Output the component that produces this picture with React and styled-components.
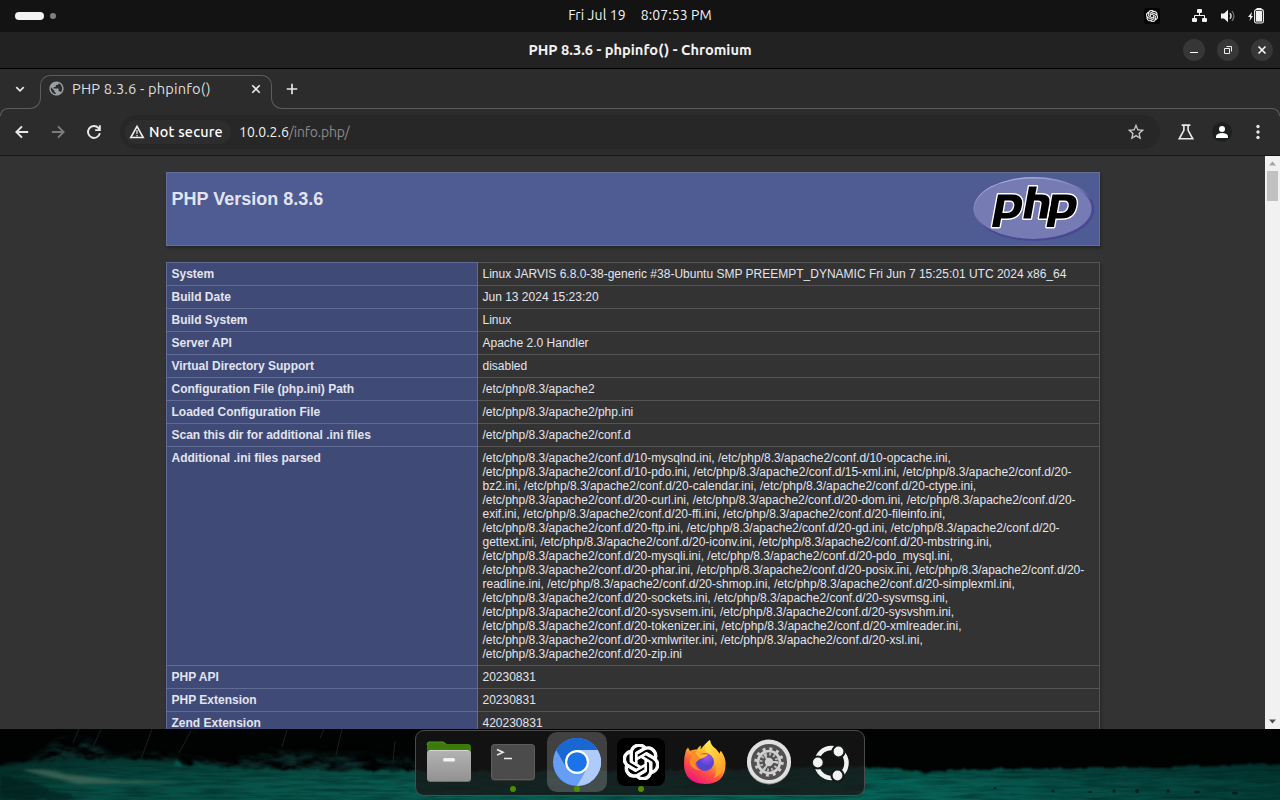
import React from 'react';
import styled, { createGlobalStyle, css } from 'styled-components';
import { SiOpenai } from 'react-icons/si';
import { MdPublic, MdStarBorder } from 'react-icons/md';

const Global = createGlobalStyle`
  html, body { margin: 0; padding: 0; background: #000; }
  *, *::before, *::after { box-sizing: border-box; }
  svg { display: block; flex: none; }
`;

const UI = '"Ubuntu", "Noto Sans", "Open Sans", sans-serif';

const Desktop = styled.div`
  position: relative;
  display: flex;
  flex-direction: column;
  width: 1280px;
  height: 800px;
  overflow: hidden;
  background: #000;
  font-family: ${UI};
  color: #f2f2f2;
`;

const PanelBar = styled.header`
  display: grid;
  grid-template-columns: 1fr auto 1fr;
  align-items: center;
  flex: none;
  height: 32px;
  background: #131313;
`;

const Workspaces = styled.div`
  display: flex;
  align-items: center;
  gap: 6px;
  padding-left: 15px;
`;

const Pill = styled.span`
  width: ${p => (p.$active ? 29 : 6)}px;
  height: ${p => (p.$active ? 8 : 6)}px;
  border-radius: 4px;
  background: ${p => (p.$active ? '#f2f2f2' : '#808080')};
`;

const Clock = styled.div`
  display: flex;
  gap: 15px;
  padding-bottom: 2px;
  font-size: 14px;
  line-height: 20px;
  white-space: nowrap;
  letter-spacing: 0.1px;
`;

const Tray = styled.div`
  display: flex;
  align-items: center;
  justify-content: flex-end;
  padding-right: 16px;
`;

const TrayApp = styled.span`
  display: grid;
  place-items: center;
  width: 16px;
  height: 16px;
  margin-right: 32px;
  border-radius: 2px;
  background: #000;
  color: #fff;
`;

const TrayIcons = styled.div`
  display: flex;
  align-items: center;
  gap: 13px;
`;

const TitleBar = styled.div`
  display: grid;
  grid-template-columns: 1fr auto 1fr;
  align-items: center;
  flex: none;
  height: 37px;
  background: #222;
  border-bottom: 1px solid #000;
`;

const WindowTitle = styled.div`
  grid-column: 2;
  font-size: 14.667px;
  font-weight: 700;
  line-height: 20px;
  letter-spacing: -0.01px;
  white-space: nowrap;
`;

const WindowButtons = styled.div`
  display: flex;
  justify-content: flex-end;
  gap: 12px;
  padding-right: 7px;
`;

const WindowButton = styled.span`
  display: grid;
  place-items: center;
  width: 22px;
  height: 22px;
  border-radius: 50%;
  background: #373737;
`;

const TabStrip = styled.div`
  display: flex;
  flex: none;
  height: 40px;
  background: #2c2c2c;
`;

const StripEdge = styled.div`
  display: flex;
  align-items: center;
  height: 40px;
  border-bottom: 1px solid #5c5c5c;
  ${p => (p.$grow
    ? css`flex: 1; margin-right: 7px; padding-left: 4px;`
    : css`flex: none; width: 23px; margin-left: 7px; padding-left: 7px;`)}
`;

const Curve = styled.span`
  align-self: flex-end;
  width: 11px;
  height: 12px;
  border-bottom: 1px solid #5c5c5c;
  ${p => (p.$side === 'left'
    ? css`border-right: 1px solid #5c5c5c; border-bottom-right-radius: 11px;`
    : css`border-left: 1px solid #5c5c5c; border-bottom-left-radius: 11px;`)}
`;

const Tab = styled.div`
  display: flex;
  align-items: center;
  align-self: flex-start;
  width: 232px;
  height: 23px;
  margin: 6px -1px 0;
  padding: 3px 9px 0 7px;
  border: 1px solid #5c5c5c;
  border-bottom: 0;
  border-radius: 10px 10px 0 0;
`;

const TabTitle = styled.span`
  flex: 1;
  padding-left: 7px;
  font-size: 14.667px;
  line-height: 20px;
  letter-spacing: 0.16px;
  color: #dedede;
  white-space: nowrap;
`;

const Toolbar = styled.div`
  position: relative;
  display: flex;
  align-items: center;
  flex: none;
  height: 47px;
  padding: 0 12px 0 13px;
  background: #2c2c2c;
  border-bottom: 1px solid #171717;

  &::before,
  &::after {
    content: '';
    position: absolute;
    top: -1px;
    width: 8px;
    height: 8px;
    border-top: 1px solid #5c5c5c;
  }
  &::before {
    left: 0;
    border-left: 1px solid #5c5c5c;
    border-top-left-radius: 8px;
  }
  &::after {
    right: 0;
    border-right: 1px solid #5c5c5c;
    border-top-right-radius: 8px;
  }
`;

const NavButtons = styled.div`
  display: flex;
  gap: 18px;
  margin-right: 17px;
`;

const Omnibox = styled.div`
  display: flex;
  align-items: center;
  flex: 1;
  height: 34px;
  padding: 0 14px 0 5px;
  border-radius: 17px;
  background: #272727;
`;

const Security = styled.div`
  display: flex;
  align-items: center;
  gap: 4px;
  width: 106px;
  height: 24px;
  padding-left: 4px;
  border-radius: 12px;
  background: #2d2d2d;
  font-size: 14.400px;
  font-weight: 500;
  line-height: 16px;
  letter-spacing: 0.22px;
  white-space: nowrap;
  color: #fff;
`;

const Url = styled.div`
  flex: 1;
  padding-left: 8px;
  font-size: 14px;
  line-height: 20px;
  color: #f0f0f0;
`;

const UrlPath = styled.span`
  letter-spacing: -0.22px;
  color: #8a8a8a;
`;

const ToolbarActions = styled.div`
  display: flex;
  align-items: center;
  gap: 16px;
  margin-left: 16px;
`;

const Avatar = styled.span`
  display: grid;
  place-items: center;
  width: 20px;
  height: 20px;
  border-radius: 50%;
  background: #1d1f1f;
`;

const Viewport = styled.div`
  display: flex;
  flex: none;
  height: 573px;
  overflow: hidden;
  background: #333;
`;

const Page = styled.main`
  flex: 1;
  overflow: hidden;
  padding-top: 16px;
  font-family: "Liberation Sans", Arial, sans-serif;
  font-size: 12px;
  line-height: 14px;
  color: #e2e4ef;
`;

const Banner = styled.div`
  display: flex;
  justify-content: space-between;
  width: 934px;
  height: 74px;
  margin: 0 auto 16px;
  padding: 4px 3.5px 4px 5px;
  border: 1px solid #666f97;
  background: #4f5b93;
  box-shadow: 1px 2px 3px rgba(0, 0, 0, 0.3);
`;

const BannerTitle = styled.h1`
  margin: 11px 0 0;
  font-size: 18px;
  line-height: 22px;
  font-weight: 700;
`;

const InfoTable = styled.table`
  width: 934px;
  margin: 0 auto;
  border-collapse: collapse;
  table-layout: fixed;
  box-shadow: 1px 2px 3px rgba(0, 0, 0, 0.3);
`;

const cell = css`
  padding: 4px 5px;
  vertical-align: top;
  text-align: left;
  line-height: 14px;
  white-space: pre-line;
`;

const Name = styled.th`
  ${cell}
  width: 311px;
  border: 1px solid #626b93;
  background: #404a77;
  font-weight: 700;
`;

const Value = styled.td`
  ${cell}
  border: 1px solid #555;
  border-left-color: #626b93;
  background: #333;
`;

const Scrollbar = styled.div`
  display: flex;
  flex-direction: column;
  align-items: center;
  width: 15px;
  background: #f1f1f1;
`;

const Thumb = styled.span`
  width: 11px;
  height: 30px;
  margin-bottom: auto;
  background: #c1c1c1;
`;

const Wallpaper = styled.div`
  flex: 1;
`;

const Dock = styled.nav`
  position: absolute;
  left: 415px;
  top: 730px;
  display: flex;
  align-items: flex-start;
  gap: 4px;
  width: 450px;
  height: 66px;
  padding: 1px 0 0 3px;
  border: 1px solid #4b4b4b;
  border-radius: 9px;
  background: rgba(22, 22, 22, 0.8);
`;

const DockItem = styled.div`
  position: relative;
  display: grid;
  place-items: center;
  flex: none;
  width: 60px;
  height: 60px;
  border-radius: 10px;
  background: ${p => (p.$active ? 'rgba(255,255,255,0.2)' : 'transparent')};
`;

const RunningDot = styled.span`
  position: absolute;
  left: 27px;
  bottom: 0;
  width: 6px;
  height: 6px;
  border-radius: 50%;
  background: #4e8c06;
`;

const AppTile = styled.span`
  display: grid;
  place-items: center;
  width: 48px;
  height: 48px;
  border-radius: 8px;
  background: #000;
  color: #fff;
`;

const NetworkIcon = () => (
  <svg width="16" height="14" viewBox="0 0 16 14" fill="#f2f2f2">
    <rect x="5" y="0" width="5" height="4" rx="1" />
    <rect x="0" y="9" width="5" height="4" rx="1" />
    <rect x="10" y="9" width="5" height="4" rx="1" />
    <path d="M7.5 3v4M2.500 10V6.500h10V10" fill="none" stroke="#f2f2f2" />
  </svg>
);

const VolumeIcon = () => (
  <svg width="14" height="14" viewBox="0 0 14 14" fill="none">
    <path d="M0 4.500h3L7 .7v12.600L3 9.500H0z" fill="#f2f2f2" />
    <path d="M9 4.200q2.200 2.800 0 5.600" stroke="#d0d0d0" strokeWidth="1.400" />
    <path d="M11 2q3.800 5 0 10" stroke="#777" strokeWidth="1.200" />
  </svg>
);

const BatteryIcon = () => (
  <svg width="16" height="16" viewBox="0 0 16 16">
    <path d="M4 4 0 9h2.300L1.500 13 5 8H3.200z" fill="#f2f2f2" />
    <rect x="6.600" y="1.600" width="8.800" height="13.400" rx="1.800" fill="none" stroke="#f2f2f2" strokeWidth="1.100" />
    <rect x="8" y="3" width="6" height="10.600" fill="#f2f2f2" />
    <path d="M8.500 .8h5" stroke="#f2f2f2" strokeWidth="1.600" />
  </svg>
);

const Glyph = ({ size = 16, d, stroke = '#e8e8e8', width = 1.7 }) => (
  <svg width={size} height={size} viewBox="0 0 16 16" fill="none" stroke={stroke} strokeWidth={width}>
    <path d={d} />
  </svg>
);

const WarningIcon = () => (
  <svg width="16" height="16" viewBox="0 0 16 16">
    <path d="M8 2.400 14.200 13.500H1.800z" fill="none" stroke="#eee" strokeWidth="1.600" />
    <path d="M8 6v4M8 11v1.600" stroke="#ccc" strokeWidth="1.500" />
  </svg>
);

const PersonIcon = () => (
  <svg width="12" height="12" viewBox="0 0 12 12" fill="#fff">
    <circle cx="6" cy="3" r="3" />
    <path d="M0 12V9.700Q1.500 7 6 7t6 2.700V12z" />
  </svg>
);

const MenuIcon = () => (
  <svg width="20" height="16" viewBox="0 0 20 16" fill="#e8e8e8">
    <circle cx="10" cy="2.500" r="1.700" />
    <circle cx="10" cy="8" r="1.700" />
    <circle cx="10" cy="13.500" r="1.700" />
  </svg>
);

const P_SHAPE = 'M25 17.500h14q11.500 0 10 10.500-1.800 13.500-15 13.500h-6l-1.500 8.500h-7.500z M31.500 23.500l-2.200 12.500h4.500q6.500 0 7.500-7 .5-5.500-4.500-5.500z';

const PhpLogo = () => (
  <svg width="122" height="65" viewBox="0 0 122 65">
    <defs>
      <linearGradient id="rim" x1="0.25" y1="0" x2="0.75" y2="1">
        <stop offset="0" stopColor="#b5b9e2" />
        <stop offset="0.4" stopColor="#7377b2" />
        <stop offset="0.6" stopColor="#484893" />
      </linearGradient>
    </defs>
    <ellipse cx="61" cy="32" rx="60.500" ry="32" fill="url(#rim)" />
    <ellipse cx="60" cy="31.700" rx="58.600" ry="30.200" fill="#777bb4" />
    <g fill="#000" stroke="#fff" strokeWidth="2.800" paintOrder="stroke" fillRule="evenodd" strokeLinejoin="round">
      <path d={P_SHAPE} />
      <path d={P_SHAPE} transform="translate(54.500 0)" />
      <path d="M56 9.500h7.800l-1.600 8h6.500q9.200 0 7.700 8.500l-2.800 15.500h-7.600l2.500-14q.8-4-3.600-4h-3.800l-3.200 18h-7.600z" />
    </g>
  </svg>
);

const Triangle = ({ down }) => (
  <svg width="15" height="15" viewBox="0 0 15 15">
    <path d={down ? 'M4 5.500h7L7.500 9.500z' : 'M4 9.500h7L7.500 5.500z'} fill={down ? '#505050' : '#a3a3a3'} />
  </svg>
);

const Landscape = () => (
  <svg width="1280" height="71" viewBox="0 0 1280 71" colorInterpolationFilters="sRGB">
    <defs>
      <linearGradient id="water" x2="1">
        <stop offset="0" stopColor="#05362f" />
        <stop offset="0.08" stopColor="#074c43" />
        <stop offset="0.35" stopColor="#085c52" />
        <stop offset="0.7" stopColor="#076458" />
        <stop offset="0.85" stopColor="#064c45" />
        <stop offset="1" stopColor="#043c36" />
      </linearGradient>
      <linearGradient id="depth" x2="0" y2="1">
        <stop offset="0" stopColor="#000" stopOpacity="0.35" />
        <stop offset="0.4" stopColor="#000" stopOpacity="0" />
      </linearGradient>
      <filter id="ripple" x="0" y="0" width="100%" height="100%">
        <feTurbulence type="fractalNoise" baseFrequency="0.025 0.3" numOctaves="4" seed="4" />
        <feColorMatrix values="0 0 0 0 0  0 0 0 0 .1  0 0 0 0 .09  1 0 0 0 -.38" />
        <feComposite in2="SourceGraphic" operator="in" />
      </filter>
      <filter id="rocks" x="0" y="-20%" width="100%" height="140%">
        <feGaussianBlur in="SourceGraphic" stdDeviation="3" result="base" />
        <feTurbulence type="fractalNoise" baseFrequency="0.05 0.12" numOctaves="5" seed="9" />
        <feColorMatrix values="0 0 0 0 .05  0 0 0 0 .19  0 0 0 0 .18  2.600 0 0 0 -.85" />
        <feComposite in2="base" operator="in" />
      </filter>
      <filter id="shore" x="0" y="-10%" width="100%" height="120%">
        <feTurbulence type="fractalNoise" baseFrequency="0.09" numOctaves="3" seed="2" result="n" />
        <feDisplacementMap in="SourceGraphic" in2="n" scale="6" xChannelSelector="R" yChannelSelector="G" result="d" />
        <feGaussianBlur in="d" stdDeviation="0.8" />
      </filter>
      <filter id="soft" x="-10%" y="-40%" width="120%" height="180%"><feGaussianBlur stdDeviation="1.500" /></filter>
    </defs>
    <rect width="1280" height="71" fill="#010202" />
    <path d="M0 38 35 28 60 10 92 11 110 28 150 24 190 29 235 32 265 22 330 25 420 29V50H0z" fill="#000" filter="url(#rocks)" opacity=".85" />
    <g filter="url(#shore)">
      <path d="M-10 40 40 31 90 31 145 30 180 35 240 39 290 41 420 42 640 42 865 38 885 39 920 43 1000 39 1130 39 1290 34V90H-10z" fill="url(#water)" />
      <path d="M-10 40 40 31 90 31 145 30 180 35 240 39 290 41 420 42 640 42 865 38 885 39 920 43 1000 39 1130 39 1290 34V90H-10z" fill="url(#depth)" />
    </g>
    <path d="M0 44 40 37 145 36 290 45 420 46 865 43 1280 40V71H0z" fill="#000" filter="url(#ripple)" />
    <path d="M0 46 22 50 50 60 82 71H0z" fill="#021a1a" opacity=".55" filter="url(#shore)" />
    <path d="M22 41q27-2 42 4l60 7q35 0 65 2l-110 1q-30-7-57-14z" fill="#436a5a" opacity=".8" filter="url(#soft)" />
    <path d="M175 31q5 0 7 7l-8-2zM192 31l16 7-13-3z" fill="#0a5b50" filter="url(#soft)" />
    <path d="M79 0 73 14M101 0 93 18M152 0 141 30M191 2 179 24M324 0 320 9M342 0 336 26M395 12l-2 20M287 1l-5 17" stroke="#1f2a29" strokeWidth=".8" />
    <g fill="#02221e">
      <ellipse cx="995" cy="59" rx="1.500" ry="1" /><ellipse cx="1053" cy="62" rx="1.500" ry="1.500" />
      <ellipse cx="1090" cy="63" rx="2" ry="1" /><ellipse cx="1114" cy="62" rx="1.500" ry="1.800" />
      <ellipse cx="1137" cy="62" rx="2" ry="2" /><ellipse cx="1168" cy="62" rx="1.500" ry="2" />
      <ellipse cx="1197" cy="63" rx="3" ry="1.500" /><ellipse cx="1235" cy="64" rx="3" ry="1.500" />
    </g>
  </svg>
);

const FilesIcon = () => (
  <svg width="48" height="48" viewBox="0 0 48 48">
    <defs><linearGradient id="folder" x2="0" y2="1"><stop stopColor="#b3b3b3" /><stop offset="1" stopColor="#929292" /></linearGradient></defs>
    <path d="M2 20V6q0-2 2-2h14q2 0 3 2h22q3 0 3 3v11z" fill="#3c7a0b" />
    <path d="M2 7q0-3 2-3h14l3 2" fill="none" stroke="#4e9413" />
    <rect x="2" y="13" width="44" height="31" rx="3.500" fill="#707070" />
    <rect x="2" y="12" width="44" height="31" rx="3.500" fill="url(#folder)" />
    <path d="M4.500 12.500h39" stroke="#d5d5d5" />
    <rect x="18" y="20" width="12" height="3.500" rx="1.500" fill="#f2f2f2" />
  </svg>
);

const TerminalIcon = () => (
  <svg width="48" height="48" viewBox="0 0 48 48">
    <rect x="2" y="7" width="44" height="36" rx="4" fill="#333" />
    <rect x="2" y="6" width="44" height="36" rx="4" fill="#5d5d5d" />
    <rect x="3" y="7" width="42" height="34" rx="3" fill="#4b4b4b" />
    <path d="m8 11.500 6 2.800-6 2.800M15 20.500h8" fill="none" stroke="#eee" strokeWidth="1.600" />
  </svg>
);

const ChromiumIcon = () => (
  <svg width="48" height="48" viewBox="0 0 48 48">
    <circle cx="24" cy="24" r="24" fill="#669df6" />
    <path d="M24 12h20.800A24 24 0 0 1 24 48l10.400-18z" fill="#aecbfa" />
    <path d="M3.200 12A24 24 0 0 1 44.800 12H24L13.600 30z" fill="#1967d2" />
    <circle cx="24" cy="24" r="12" fill="#fff" />
    <circle cx="24" cy="24" r="9.800" fill="#1a73e8" />
  </svg>
);

const FirefoxIcon = () => (
  <svg width="48" height="48" viewBox="0 0 48 48">
    <defs>
      <linearGradient id="fox" x1="0.8" y1="0.1" x2="0.3" y2="1">
        <stop stopColor="#fff04a" /><stop offset=".35" stopColor="#ffb52b" /><stop offset=".65" stopColor="#ff553f" /><stop offset="1" stopColor="#ed147d" />
      </linearGradient>
      <radialGradient id="orb" cx=".6" cy=".2"><stop stopColor="#a653f7" /><stop offset="1" stopColor="#5646cf" /></radialGradient>
      <linearGradient id="flame" x2=".6" y2="1"><stop stopColor="#fff44f" /><stop offset="1" stopColor="#ff9b24" /></linearGradient>
    </defs>
    <path d="M5 12 7 9.500 9 13q3-2 7-1.500 1.500-3 4-4l-.5 4q3-4 9-9.500 1 6 6 9l4 5 1-3q5 6 5 13 0 20-20.500 20Q3 45 3 26q0-8 2-14z" fill="url(#fox)" />
    <path d="M29 2q1 6 6 9l4 5 1-3q5 7 4 14-3 10-11 13 5-9-1-19l-7-8q-3-6 4-11z" fill="url(#flame)" />
    <circle cx="24" cy="24" r="9" fill="url(#orb)" />
    <path d="M9 13q6-2 10 3h8q-2 4-8 5l-5 4q0 5 6 7-8 0-11-6-1-4 2-7l3-1z" fill="#ff8a25" />
    <path d="M14 14q4 0 5 3l8-.5q-3 3-8 4z" fill="#ffc43a" />
  </svg>
);

const SettingsIcon = () => (
  <svg width="48" height="48" viewBox="0 0 48 48">
    <circle cx="24" cy="24.500" r="22" fill="#8d8d8d" />
    <circle cx="24" cy="23.500" r="22" fill="#e0e0e0" />
    <circle cx="24" cy="24" r="18" fill="#515151" />
    <circle cx="24" cy="24" r="11" fill="none" stroke="#d0d0d0" strokeWidth="2.600" />
    <circle cx="24" cy="24" r="13.300" fill="none" stroke="#d0d0d0" strokeWidth="2.800" strokeDasharray="3 3.964" />
    <circle cx="24" cy="24" r="8" fill="none" stroke="#bdbdbd" strokeWidth="3" strokeDasharray="1.800 2.389" />
    <path d="M24 24h9M24 24l-5-8M24 24l-5 8" fill="none" stroke="#c8c8c8" strokeWidth="2" />
    <circle cx="24" cy="24" r="4.200" fill="#d0d0d0" />
  </svg>
);

const UbuntuIcon = () => (
  <svg width="48" height="48" viewBox="0 0 48 48">
    <circle cx="22.500" cy="25" r="15" fill="none" stroke="#f2f2f2" strokeWidth="4.500" />
    <g fill="#f2f2f2" stroke="#131818" strokeWidth="2.200">
      <circle cx="8.800" cy="24.500" r="6" /><circle cx="29.500" cy="13.500" r="6" /><circle cx="28.500" cy="37.500" r="6" />
    </g>
  </svg>
);

const INI_FILES = `/etc/php/8.3/apache2/conf.d/10-mysqlnd.ini, /etc/php/8.3/apache2/conf.d/10-opcache.ini,
/etc/php/8.3/apache2/conf.d/10-pdo.ini, /etc/php/8.3/apache2/conf.d/15-xml.ini, /etc/php/8.3/apache2/conf.d/20-
bz2.ini, /etc/php/8.3/apache2/conf.d/20-calendar.ini, /etc/php/8.3/apache2/conf.d/20-ctype.ini,
/etc/php/8.3/apache2/conf.d/20-curl.ini, /etc/php/8.3/apache2/conf.d/20-dom.ini, /etc/php/8.3/apache2/conf.d/20-
exif.ini, /etc/php/8.3/apache2/conf.d/20-ffi.ini, /etc/php/8.3/apache2/conf.d/20-fileinfo.ini,
/etc/php/8.3/apache2/conf.d/20-ftp.ini, /etc/php/8.3/apache2/conf.d/20-gd.ini, /etc/php/8.3/apache2/conf.d/20-
gettext.ini, /etc/php/8.3/apache2/conf.d/20-iconv.ini, /etc/php/8.3/apache2/conf.d/20-mbstring.ini,
/etc/php/8.3/apache2/conf.d/20-mysqli.ini, /etc/php/8.3/apache2/conf.d/20-pdo_mysql.ini,
/etc/php/8.3/apache2/conf.d/20-phar.ini, /etc/php/8.3/apache2/conf.d/20-posix.ini, /etc/php/8.3/apache2/conf.d/20-
readline.ini, /etc/php/8.3/apache2/conf.d/20-shmop.ini, /etc/php/8.3/apache2/conf.d/20-simplexml.ini,
/etc/php/8.3/apache2/conf.d/20-sockets.ini, /etc/php/8.3/apache2/conf.d/20-sysvmsg.ini,
/etc/php/8.3/apache2/conf.d/20-sysvsem.ini, /etc/php/8.3/apache2/conf.d/20-sysvshm.ini,
/etc/php/8.3/apache2/conf.d/20-tokenizer.ini, /etc/php/8.3/apache2/conf.d/20-xmlreader.ini,
/etc/php/8.3/apache2/conf.d/20-xmlwriter.ini, /etc/php/8.3/apache2/conf.d/20-xsl.ini,
/etc/php/8.3/apache2/conf.d/20-zip.ini`;

const ROWS = [
  ['System', 'Linux JARVIS 6.8.0-38-generic #38-Ubuntu SMP PREEMPT_DYNAMIC Fri Jun 7 15:25:01 UTC 2024 x86_64'],
  ['Build Date', 'Jun 13 2024 15:23:20'],
  ['Build System', 'Linux'],
  ['Server API', 'Apache 2.0 Handler'],
  ['Virtual Directory Support', 'disabled'],
  ['Configuration File (php.ini) Path', '/etc/php/8.3/apache2'],
  ['Loaded Configuration File', '/etc/php/8.3/apache2/php.ini'],
  ['Scan this dir for additional .ini files', '/etc/php/8.3/apache2/conf.d'],
  ['Additional .ini files parsed', INI_FILES],
  ['PHP API', '20230831'],
  ['PHP Extension', '20230831'],
  ['Zend Extension', '420230831'],
];

const DOCK_APPS = [
  { id: 'files', icon: <FilesIcon /> },
  { id: 'terminal', icon: <TerminalIcon />, running: true },
  { id: 'chromium', icon: <ChromiumIcon />, running: true, active: true },
  { id: 'chatgpt', icon: <AppTile><SiOpenai size={36} stroke="currentColor" strokeWidth={0.7} /></AppTile>, running: true },
  { id: 'firefox', icon: <FirefoxIcon /> },
  { id: 'settings', icon: <SettingsIcon /> },
  { id: 'apps', icon: <UbuntuIcon /> },
];

export default function App() {
  return (
    <Desktop>
      <Global />
      <PanelBar>
        <Workspaces><Pill $active /><Pill /></Workspaces>
        <Clock><span>Fri Jul 19</span><span>8:07:53 PM</span></Clock>
        <Tray>
          <TrayApp><SiOpenai size={12} stroke="currentColor" strokeWidth={0.8} /></TrayApp>
          <TrayIcons><NetworkIcon /><VolumeIcon /><BatteryIcon /></TrayIcons>
        </Tray>
      </PanelBar>

      <TitleBar>
        <WindowTitle>PHP 8.3.6 - phpinfo() - Chromium</WindowTitle>
        <WindowButtons>
          <WindowButton><Glyph d="M4 10.500h8" width={1} stroke="#fff" /></WindowButton>
          <WindowButton><Glyph d="M4.500 6.500h5v5h-5zM6.500 4.500h5v5" width={1} stroke="#eee" /></WindowButton>
          <WindowButton><Glyph d="m4.500 4.500 7 7m0-7-7 7" width={1.500} stroke="#fff" /></WindowButton>
        </WindowButtons>
      </TitleBar>

      <TabStrip>
        <StripEdge><Glyph size={12} d="m3 5.500 5 5 5-5" width={2.200} /></StripEdge>
        <Curve $side="left" />
        <Tab>
          <MdPublic size={17} color="#9aa0a8" />
          <TabTitle>PHP 8.3.6 - phpinfo()</TabTitle>
          <Glyph size={12} d="m3 3 10 10M13 3 3 13" width={2.200} />
        </Tab>
        <Curve $side="right" />
        <StripEdge $grow><Glyph size={12} d="M8 1v14M1 8h14" width={2.200} /></StripEdge>
      </TabStrip>

      <Toolbar>
        <NavButtons>
          <Glyph size={18} d="M13.500 8H3M8 3 3 8l5 5" />
          <Glyph size={18} d="M2.500 8H13M8 3l5 5-5 5" stroke="#7c7c7c" />
          <Glyph size={18} d="M13.200 9A5.300 5.300 0 1 1 12 4.500l1 1M13.200 2v4.300H9" />
        </NavButtons>
        <Omnibox>
          <Security><WarningIcon />Not secure</Security>
          <Url>10.0.2.6<UrlPath>/info.php/</UrlPath></Url>
          <MdStarBorder size={20} color="#c8c8c8" />
        </Omnibox>
        <ToolbarActions>
          <Glyph size={20} d="M4.500 2.500h7M6.300 2.500v4.200L2.600 13.400h10.800L9.700 6.700V2.500" width={1.300} />
          <Avatar><PersonIcon /></Avatar>
          <MenuIcon />
        </ToolbarActions>
      </Toolbar>

      <Viewport>
        <Page>
          <Banner>
            <BannerTitle>PHP Version 8.3.6</BannerTitle>
            <PhpLogo />
          </Banner>
          <InfoTable>
            <tbody>
              {ROWS.map(([name, value]) => (
                <tr key={name}><Name>{name}</Name><Value>{value}</Value></tr>
              ))}
            </tbody>
          </InfoTable>
        </Page>
        <Scrollbar><Triangle /><Thumb /><Triangle down /></Scrollbar>
      </Viewport>

      <Wallpaper><Landscape /></Wallpaper>

      <Dock>
        {DOCK_APPS.map(app => (
          <DockItem key={app.id} $active={app.active}>
            {app.icon}
            {app.running && <RunningDot />}
          </DockItem>
        ))}
      </Dock>
    </Desktop>
  );
}
